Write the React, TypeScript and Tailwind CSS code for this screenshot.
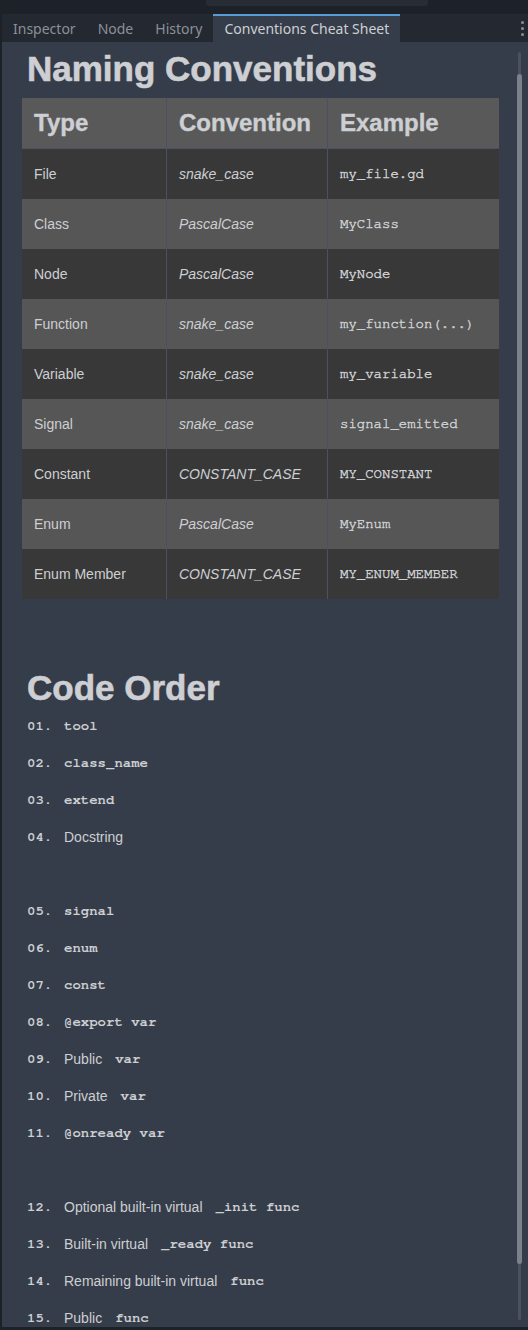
import React from "react";

type Row = { type: string; convention: string; example: string };

const rows: Row[] = [
  { type: "File", convention: "snake_case", example: "my_file.gd" },
  { type: "Class", convention: "PascalCase", example: "MyClass" },
  { type: "Node", convention: "PascalCase", example: "MyNode" },
  { type: "Function", convention: "snake_case", example: "my_function(...)" },
  { type: "Variable", convention: "snake_case", example: "my_variable" },
  { type: "Signal", convention: "snake_case", example: "signal_emitted" },
  { type: "Constant", convention: "CONSTANT_CASE", example: "MY_CONSTANT" },
  { type: "Enum", convention: "PascalCase", example: "MyEnum" },
  { type: "Enum Member", convention: "CONSTANT_CASE", example: "MY_ENUM_MEMBER" },
];

// null = blank line between groups
type Item = { n: string; text?: string; code?: string } | null;

const order: Item[] = [
  { n: "01.", code: "tool" },
  { n: "02.", code: "class_name" },
  { n: "03.", code: "extend" },
  { n: "04.", text: "Docstring" },
  null,
  { n: "05.", code: "signal" },
  { n: "06.", code: "enum" },
  { n: "07.", code: "const" },
  { n: "08.", code: "@export var" },
  { n: "09.", text: "Public", code: "var" },
  { n: "10.", text: "Private", code: "var" },
  { n: "11.", code: "@onready var" },
  null,
  { n: "12.", text: "Optional built-in virtual", code: "_init func" },
  { n: "13.", text: "Built-in virtual", code: "_ready func" },
  { n: "14.", text: "Remaining built-in virtual", code: "func" },
  { n: "15.", text: "Public", code: "func" },
];

const sans = "font-['Liberation_Sans',Arial,sans-serif]";
const mono = "font-['FreeMono','Courier_New',monospace]";

function Tabs() {
  return (
    <div className="flex h-[28px] items-stretch bg-[#232831] font-['Noto_Sans',sans-serif] text-[14px]">
      <div className="flex items-center px-[11px] text-[#8c9098]">Inspector</div>
      <div className="flex items-center px-[11px] text-[#8c9098]">Node</div>
      <div className="flex items-center px-[11px] text-[#8c9098]">History</div>
      <div className="flex items-center border-t-2 border-[#5a9bd5] bg-[#363d4a] px-[11px] pb-[2px] text-[#cdcfd2]">
        Conventions Cheat Sheet
      </div>
      <div className="ml-auto flex flex-col items-center justify-center gap-[3px] pr-[4px]">
        <span className="h-[3px] w-[3px] rounded-full bg-[#8a8e95]" />
        <span className="h-[3px] w-[3px] rounded-full bg-[#8a8e95]" />
        <span className="h-[3px] w-[3px] rounded-full bg-[#8a8e95]" />
      </div>
    </div>
  );
}

function NamingTable() {
  return (
    <div className={`w-[477px] text-[#cdcfd2] ${sans}`}>
      <div className="grid h-[51px] grid-cols-[145px_161px_171px] border-b border-[#4a5262] bg-[#595959] text-[24px] font-bold [-webkit-text-stroke:0.4px_#cdcfd3]">
        <div className="flex items-center border-r border-[#4a5262] pl-[12px]">Type</div>
        <div className="flex items-center border-r border-[#4a5262] pl-[12px]">Convention</div>
        <div className="flex items-center pl-[12px]">Example</div>
      </div>
      {rows.map((r, i) => (
        <div
          key={r.type}
          className={`grid h-[50px] grid-cols-[145px_161px_171px] text-[14px] ${
            i % 2 === 0 ? "bg-[#383838]" : "bg-[#565656]"
          }`}
        >
          <div className="flex items-center border-r border-[#4a5262] pl-[12px]">{r.type}</div>
          <div className="flex items-center border-r border-[#4a5262] pl-[12px] italic">{r.convention}</div>
          <div className={`flex items-center pl-[12px] [-webkit-text-stroke:0.45px_#cdcfd2] ${mono}`}>{r.example}</div>
        </div>
      ))}
    </div>
  );
}

function CodeOrder() {
  return (
    <div className="text-[14px] text-[#cdcfd2]">
      {order.map((it, i) =>
        it ? (
          <div key={i} className="flex h-[37px] items-center pl-[5px]">
            <span className={`w-[37px] font-bold ${mono}`}>{it.n}</span>
            {it.text && <span className={sans}>{it.text}</span>}
            {it.code && (
              <span className={`font-bold ${mono} ${it.text ? "ml-[13px]" : ""}`}>{it.code}</span>
            )}
          </div>
        ) : (
          <div key={i} className="h-[37px]" />
        ),
      )}
    </div>
  );
}

export default function App() {
  return (
    <div className="h-[1330px] w-[528px] overflow-hidden bg-[#1d2128]">
      <div className="flex h-[14px]">
        <div className="ml-[206px] h-[6px] w-[222px] rounded-b-[3px] bg-[#272c35]" />
      </div>
      <div className="ml-[2px] flex h-[1313px] flex-col">
        <Tabs />
        <div className="relative flex-1 overflow-hidden bg-[#363d4a] pl-[20px]">
          <h1 className={`mt-[7px] h-[40px] pl-[5px] text-[35px] leading-[40px] font-bold text-[#cdcfd3] [-webkit-text-stroke:0.6px_#cdcfd3] ${sans}`}>
            Naming Conventions
          </h1>
          <div className="mt-[9px]">
            <NamingTable />
          </div>
          <h1 className={`mt-[69px] h-[40px] pl-[5px] text-[35px] leading-[40px] font-bold text-[#cdcfd3] [-webkit-text-stroke:0.6px_#cdcfd3] ${sans}`}>
            Code Order
          </h1>
          <CodeOrder />
          {/* scrollbar */}
          <div className="absolute top-[10px] left-[516px] h-[1268px] w-[3px] rounded-full bg-[#4b525e]" />
          <div className="absolute top-[32px] left-[515px] h-[1190px] w-[5px] rounded-full bg-[#7b818b]" />
        </div>
      </div>
    </div>
  );
}
